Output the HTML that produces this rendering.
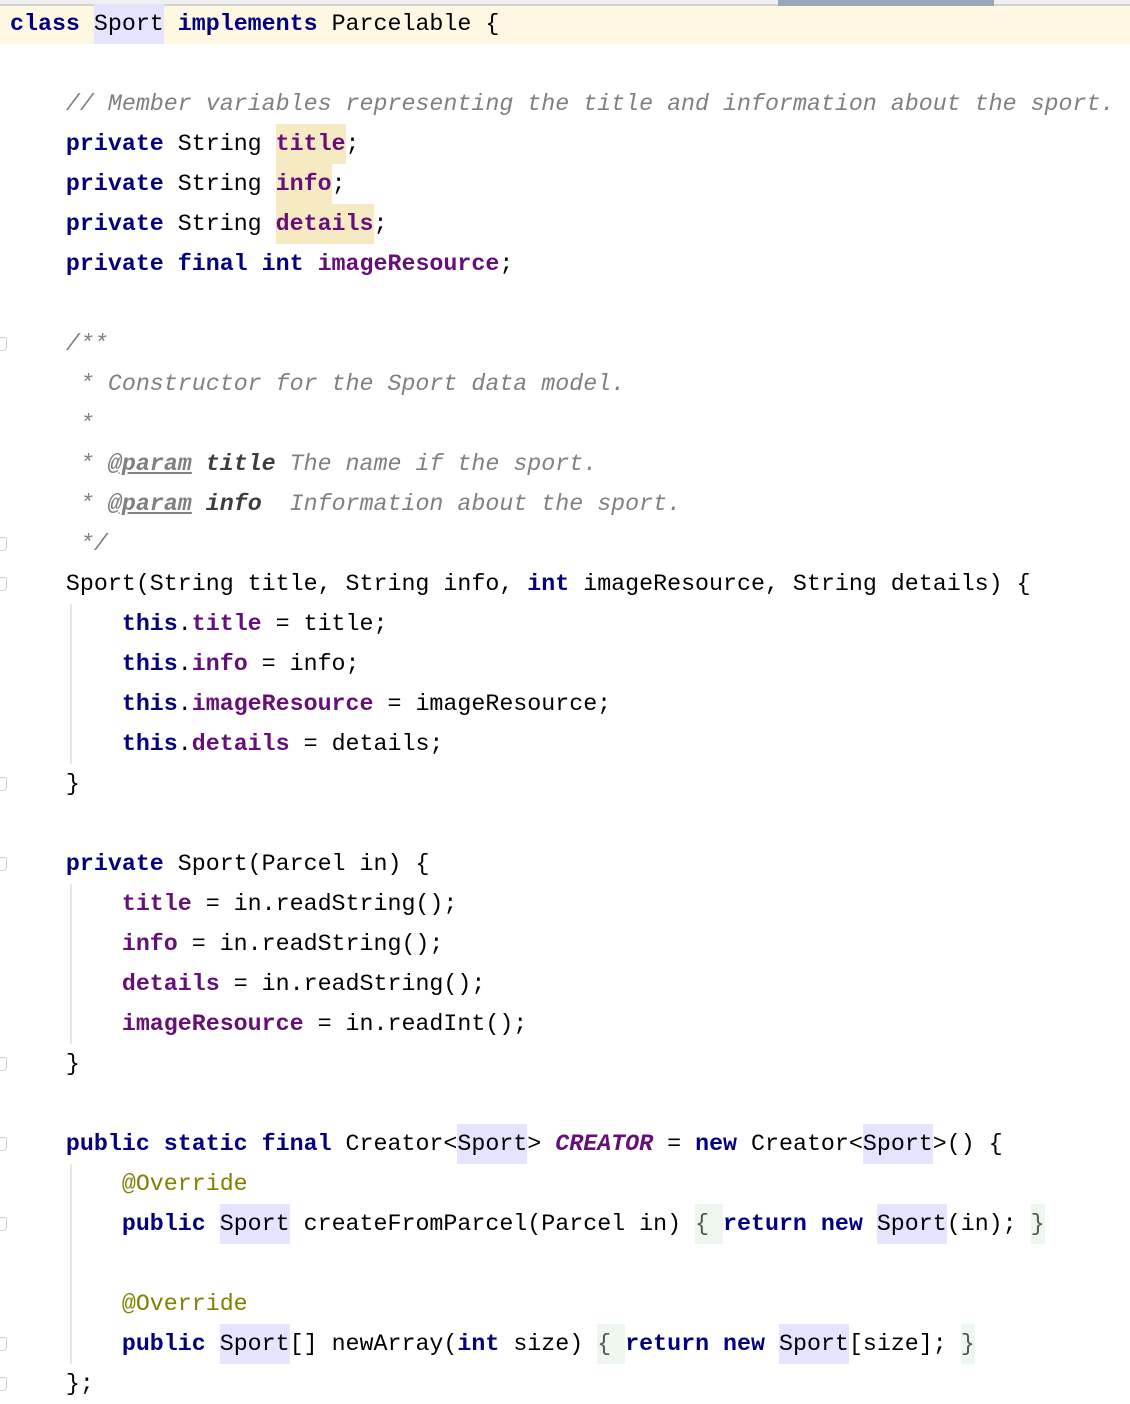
<!DOCTYPE html>
<html><head><meta charset="utf-8"><style>
html,body{margin:0;padding:0;background:#fff;width:1130px;height:1404px;overflow:hidden;position:relative}
.top{position:absolute;left:0;top:0;width:1130px;height:4px;background:#f0f0f0}
.topl{position:absolute;left:0;top:4px;width:1130px;height:2px;background:#d3d3d3}
.bar{position:absolute;left:778px;top:0;width:216px;height:6px;background:#9aa7b8}
.hl0{position:absolute;left:0;top:6px;width:1130px;height:38px;background:#fef8e2}
.r{position:absolute;left:10px;height:40px;line-height:40px;white-space:pre;font-family:"Liberation Mono",monospace;font-size:23.3px;color:#000}
.r span{display:inline-block;height:40px;line-height:40px}
.k{color:#000080;font-weight:bold}
.f{color:#660e7a;font-weight:bold}
.c{color:#808080;font-style:italic}
.a{color:#808000}
.t{color:#808080;font-style:italic;font-weight:bold;text-decoration:underline}
.p{color:#3d3d3d;font-style:italic;font-weight:bold}
.s{background:#e4e4ff}
.y{background:#f5eac1}
.g{background:#edf7ed;color:#555}
.cr{color:#660e7a;font-weight:bold;font-style:italic}
.ig{position:absolute;left:70px;width:2px;background:#e6e6e6}
.fi{position:absolute;left:0;width:6px;height:12px;border:1.5px solid #cfcfcf;border-left:none;border-radius:0 2px 4px 0}
</style></head><body>
<div class="top"></div><div class="topl"></div><div class="bar"></div>
<div class="hl0"></div>
<div class="ig" style="top:604px;height:160px"></div>
<div class="ig" style="top:884px;height:160px"></div>
<div class="ig" style="top:1164px;height:200px"></div>
<div class="fi" style="top:337px"></div>
<div class="fi" style="top:537px"></div>
<div class="fi" style="top:577px"></div>
<div class="fi" style="top:777px"></div>
<div class="fi" style="top:857px"></div>
<div class="fi" style="top:1057px"></div>
<div class="fi" style="top:1137px"></div>
<div class="fi" style="top:1217px"></div>
<div class="fi" style="top:1337px"></div>
<div class="fi" style="top:1377px"></div>

<div class="r" style="top:4px"><span class="k">class</span> <span class="s">Sport</span> <span class="k">implements</span> Parcelable {</div>
<div class="r" style="top:84px">    <span class="c">// Member variables representing the title and information about the sport.</span></div>
<div class="r" style="top:124px">    <span class="k">private</span> String <span class="f y">title</span>;</div>
<div class="r" style="top:164px">    <span class="k">private</span> String <span class="f y">info</span>;</div>
<div class="r" style="top:204px">    <span class="k">private</span> String <span class="f y">details</span>;</div>
<div class="r" style="top:244px">    <span class="k">private final int</span> <span class="f">imageResource</span>;</div>
<div class="r" style="top:324px">    <span class="c">/**</span></div>
<div class="r" style="top:364px">     <span class="c">* Constructor for the Sport data model.</span></div>
<div class="r" style="top:404px">     <span class="c">*</span></div>
<div class="r" style="top:444px">     <span class="c">* </span><span class="t">@param</span> <span class="p">title</span><span class="c"> The name if the sport.</span></div>
<div class="r" style="top:484px">     <span class="c">* </span><span class="t">@param</span> <span class="p">info</span><span class="c">  Information about the sport.</span></div>
<div class="r" style="top:524px">     <span class="c">*/</span></div>
<div class="r" style="top:564px">    Sport(String title, String info, <span class="k">int</span> imageResource, String details) {</div>
<div class="r" style="top:604px">        <span class="k">this</span>.<span class="f">title</span> = title;</div>
<div class="r" style="top:644px">        <span class="k">this</span>.<span class="f">info</span> = info;</div>
<div class="r" style="top:684px">        <span class="k">this</span>.<span class="f">imageResource</span> = imageResource;</div>
<div class="r" style="top:724px">        <span class="k">this</span>.<span class="f">details</span> = details;</div>
<div class="r" style="top:764px">    }</div>
<div class="r" style="top:844px">    <span class="k">private</span> Sport(Parcel in) {</div>
<div class="r" style="top:884px">        <span class="f">title</span> = in.readString();</div>
<div class="r" style="top:924px">        <span class="f">info</span> = in.readString();</div>
<div class="r" style="top:964px">        <span class="f">details</span> = in.readString();</div>
<div class="r" style="top:1004px">        <span class="f">imageResource</span> = in.readInt();</div>
<div class="r" style="top:1044px">    }</div>
<div class="r" style="top:1124px">    <span class="k">public static final</span> Creator&lt;<span class="s">Sport</span>&gt; <span class="cr">CREATOR</span> = <span class="k">new</span> Creator&lt;<span class="s">Sport</span>&gt;() {</div>
<div class="r" style="top:1164px">        <span class="a">@Override</span></div>
<div class="r" style="top:1204px">        <span class="k">public</span> <span class="s">Sport</span> createFromParcel(Parcel in) <span class="g">{ </span><span class="k">return new</span> <span class="s">Sport</span>(in); <span class="g">}</span></div>
<div class="r" style="top:1284px">        <span class="a">@Override</span></div>
<div class="r" style="top:1324px">        <span class="k">public</span> <span class="s">Sport</span>[] newArray(<span class="k">int</span> size) <span class="g">{ </span><span class="k">return new</span> <span class="s">Sport</span>[size]; <span class="g">}</span></div>
<div class="r" style="top:1364px">    };</div>
</body></html>
